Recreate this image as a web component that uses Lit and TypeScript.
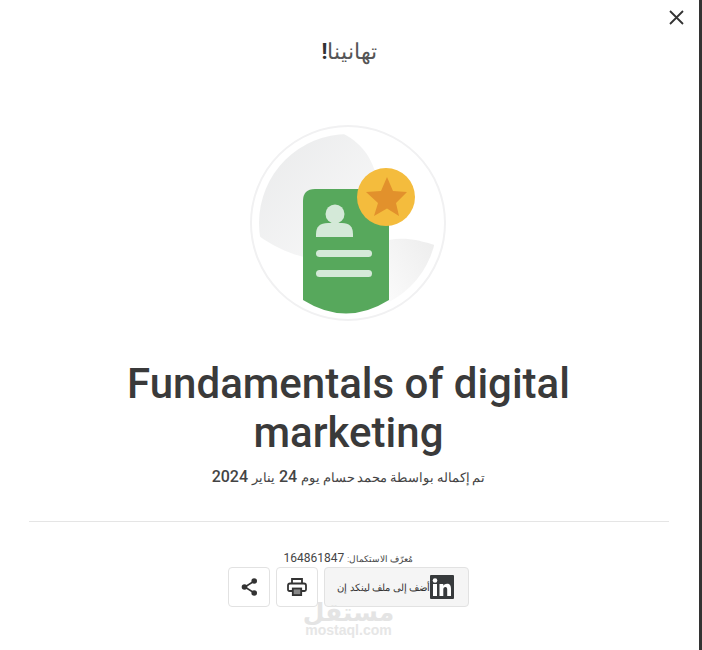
import { LitElement, html, css } from "lit";
import { customElement } from "lit/decorators.js";

@customElement("app-root")
export class AppRoot extends LitElement {
  static styles = css`
    :host { display: block; width: 702px; height: 650px; overflow: hidden; background: #fff; font-family: Roboto, "Liberation Sans", sans-serif; color: #373a3c; }
    .frame { display: flex; height: 650px; }
    .main { position: relative; flex: 1; min-width: 0; display: flex; flex-direction: column; align-items: center; padding-top: 37px; box-sizing: border-box; }
    .edge { width: 3px; background: #333; }
    .close { position: absolute; top: 9px; right: 14px; width: 17px; height: 17px; }
    .congrats { font-size: 22px; line-height: 30px; height: 30px; color: #555; font-weight: 300; }
    .congrats b { color: #333; font-weight: 700; }
    .art { display: block; margin: 58px 2px 0 0; }
    h1 { margin: 36px 2px 0 0; width: 520px; text-align: center; font-size: 42px; line-height: 49px; font-weight: 500; color: #3a3a3a; }
    .sub { margin: 8px 2px 0 0; font-size: 16px; line-height: 24px; color: #444; font-weight: 500; }
    .ar { font-size: 12.500px; font-weight: 300; color: #444; word-spacing: -0.400px; }
    .rule { width: 640px; height: 1px; background: #e5e5e5; margin: 31px 2px 0 0; }
    .id { margin: 28px 2px 0 0; font-size: 12px; line-height: 16px; color: #444; }
    .id .ar { font-size: 9.200px; word-spacing: 0; }
    .actions { display: flex; gap: 6px; margin: 0 2px 0 0; }
    .btn { box-sizing: border-box; height: 40px; border: 1px solid #e2e2e2; border-radius: 4px; display: flex; align-items: center; justify-content: center; background: #fff; }
    .sq { width: 42px; }
    .li { width: 145px; background: #f5f5f5; font-size: 10px; font-weight: 300; color: #333; justify-content: flex-start; padding-right: 14px; }
    .mark { position: absolute; left: 0; right: 2px; top: 600px; display: flex; flex-direction: column; align-items: center; color: #e4e4e4; pointer-events: none; }
    .mark b { font-size: 25px; line-height: 22px; height: 22px; font-weight: 900; font-family: "Noto Sans", "DejaVu Sans", sans-serif; }
    .mark span { font-size: 14px; line-height: 16px; font-family: "Liberation Sans", sans-serif; font-weight: 700; color: #e6e6e6; }
  `;
  render() {
    return html`<div class="frame">
      <div class="main">
        <svg class="close" viewBox="0 0 17 17"><path d="M2 2 15 15M15 2 2 15" stroke="#333" stroke-width="1.800" fill="none"/></svg>
        <div class="congrats" dir="rtl">تهانينا<b>!</b></div>
        <svg class="art" width="198" height="198" viewBox="0 0 198 198">
          <defs>
            <linearGradient id="g1" x1="0" y1="0" x2="1" y2="1"><stop offset="0" stop-color="#e8e9ea"/><stop offset="1" stop-color="#fafafa"/></linearGradient>
            <linearGradient id="g2" x1="1" y1="0" x2="0" y2="1"><stop offset="0" stop-color="#ececec"/><stop offset="1" stop-color="#fcfcfc"/></linearGradient>
            <clipPath id="c"><circle cx="98" cy="98" r="89"/></clipPath>
          </defs>
          <circle cx="98" cy="98" r="97" fill="#fff" stroke="#f1f1f2" stroke-width="2"/>
          <g clip-path="url(#c)">
            <path d="M92 8C112 18 124 34 128 60L70 135C45 132 22 122 0 104L0 0Z" fill="url(#g1)"/>
            <path d="M139 115C155 112 170 115 190 122L190 190L139 178Z" fill="url(#g2)"/>
          </g>
          <path d="M53 76Q53 64 65 64H139V175Q96 202 53 175Z" fill="#57a85c"/>
          <circle cx="85" cy="89" r="9.500" fill="#d4e9d8"/>
          <path d="M66 112V109Q66 98 78 98H92Q103 98 103 109V112Z" fill="#d4e9d8"/>
          <rect x="66" y="125" width="56" height="7" rx="3.500" fill="#d4e9d8"/>
          <rect x="66" y="145" width="56" height="7" rx="3.500" fill="#d4e9d8"/>
          <circle cx="136" cy="72" r="29" fill="#f4bc3d"/>
          <path d="M137 52 143 66 157 67 146 78 149 91 137 83.500 124 91 128 78 116 67 131 66Z" fill="#e2912c"/>
        </svg>
        <h1>Fundamentals of digital marketing</h1>
        <div class="sub" dir="rtl"><span class="ar">تم إكماله بواسطة محمد حسام يوم</span> 24 <span class="ar">يناير</span> 2024</div>
        <div class="rule"></div>
        <div class="id" dir="rtl"><span class="ar">مُعرّف الاستكمال:</span> 164861847</div>
        <div class="actions" dir="rtl">
          <div class="btn li">
            <svg width="24" height="24" viewBox="0 0 24 24"><rect width="24" height="24" rx="1" fill="#373a3c"/><rect x="3" y="9" width="4" height="12" fill="#fff"/><circle cx="5" cy="5.500" r="2.300" fill="#fff"/><path d="M9.500 9H13.300V10.700C14 9.500 15.500 8.700 17 8.700C20 8.700 21 10.700 21 13.700V21H17.200V14.500C17.200 13 16.700 12 15.400 12C14 12 13.300 13 13.300 14.500V21H9.500Z" fill="#fff"/></svg>
            <span>أضف إلى ملف لينكد إن</span>
          </div>
          <div class="btn sq">
            <svg width="20" height="18" viewBox="0 0 20 18"><path d="M5 5V1H15V5M5 13H2.500Q1 13 1 11.500V7.500Q1 5.500 3 5.500H17Q19 5.500 19 7.500V11.500Q19 13 17.500 13H15" stroke="#333" stroke-width="1.800" fill="none"/><rect x="5.800" y="10.500" width="8.400" height="6.600" stroke="#333" stroke-width="1.800" fill="#888"/></svg>
          </div>
          <div class="btn sq">
            <svg width="17" height="18" viewBox="0 0 17 18"><path d="M13 3.200 3.800 9 13 14.800" stroke="#333" stroke-width="1.600" fill="none"/><circle cx="13.200" cy="3" r="2.800" fill="#333"/><circle cx="3.500" cy="9" r="2.800" fill="#333"/><circle cx="13.200" cy="15" r="2.800" fill="#333"/></svg>
          </div>
        </div>
        <div class="mark"><b>مستقل</b><span>mostaql.com</span></div>
      </div>
      <div class="edge"></div>
    </div>`;
  }
}
